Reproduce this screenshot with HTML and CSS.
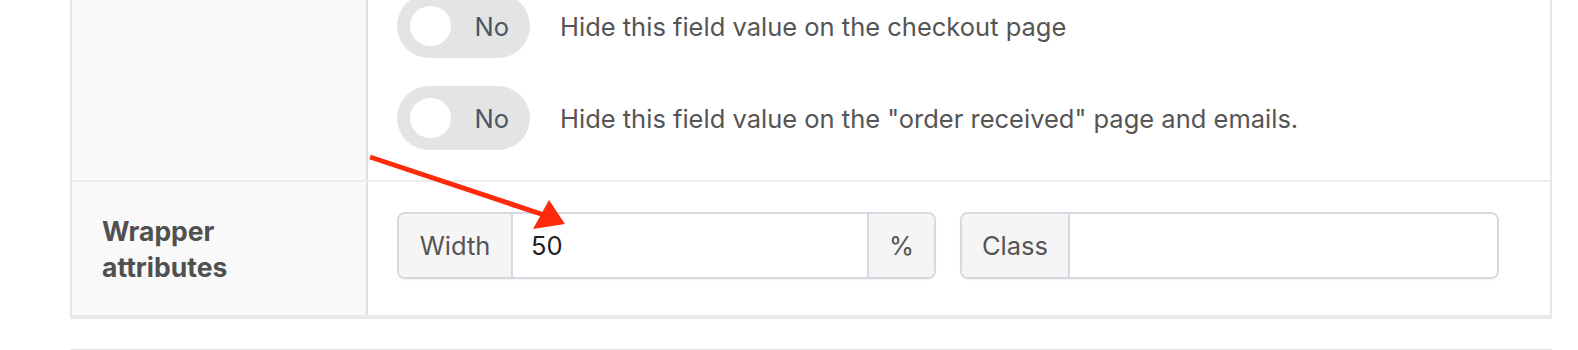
FILE: index.html
```html
<!DOCTYPE html>
<html lang="en">
<head>
<meta charset="utf-8">
<title>Field settings</title>
<link rel="stylesheet" href="styles.css">
</head>
<body>
<div class="page">
  <div class="settings">
    <div class="row row-toggles">
      <div class="label"></div>
      <div class="field toggles">
        <div class="toggle-line">
          <span class="toggle"><span class="knob"></span><span class="toggle-text">No</span></span>
          <span class="desc">Hide this field value on the checkout page</span>
        </div>
        <div class="toggle-line">
          <span class="toggle"><span class="knob"></span><span class="toggle-text">No</span></span>
          <span class="desc">Hide this field value on the "order received" page and emails.</span>
        </div>
      </div>
    </div>
    <div class="row row-wrapper">
      <div class="label"><span>Wrapper<br>attributes</span></div>
      <div class="field groups">
        <div class="input-group">
          <span class="addon addon-width">Width</span>
          <span class="input">50</span>
          <span class="addon addon-unit">%</span>
        </div>
        <div class="input-group">
          <span class="addon addon-class">Class</span>
          <span class="input"></span>
        </div>
      </div>
    </div>
  </div>
  <div class="sep"></div>
</div>
<svg class="arrow" width="1578" height="350" viewBox="0 0 1578 350" aria-hidden="true">
  <line x1="370" y1="157" x2="544" y2="215" stroke="#fc2b0c" stroke-width="5" stroke-linecap="butt"/>
  <polygon points="565,224 533,229 549,200" fill="#fc2b0c"/>
</svg>
</body>
</html>
```

FILE: styles.css
```css
* { box-sizing: border-box; }

html, body {
  margin: 0;
  padding: 0;
  background: #ffffff;
  overflow: hidden;
}

body {
  position: relative;
  width: 1578px;
  height: 350px;
  font-family: Inter, "Noto Sans", "Liberation Sans", sans-serif;
  font-size: 25.5px;
  color: #555555;
}

.page {
  margin-left: 70px;
  width: 1482px;
  margin-top: -36px;
}

.settings {
  border-left: 2px solid #e8e8e8;
  border-right: 2px solid #e8e8e8;
  border-bottom: 4px solid #e9e9e9;
}

.row {
  display: flex;
}

.row-toggles {
  border-bottom: 2px solid #ececec;
}

.label {
  flex: 0 0 296px;
  background: #f9f9f9;
  border-right: 2px solid #e0e0e0;
  display: flex;
  align-items: center;
  padding-left: 30px;
  font-weight: 700;
  font-size: 26.5px;
  line-height: 36px;
  color: #505050;
}

.field {
  flex: 1 1 auto;
  padding-left: 29px;
}

.toggles {
  display: flex;
  flex-direction: column;
  gap: 28px;
  padding-top: 30px;
  padding-bottom: 30px;
}

.toggle-line {
  display: flex;
  align-items: center;
  gap: 30px;
}

.toggle {
  flex: 0 0 133px;
  height: 64px;
  border-radius: 32px;
  background: #e4e4e4;
  display: flex;
  align-items: center;
  padding-left: 13px;
  padding-right: 21px;
}

.knob {
  width: 41px;
  height: 40px;
  border-radius: 50%;
  background: #ffffff;
}

.toggle-text {
  margin-left: auto;
  color: #4a5568;
}

.desc {
  color: #555555;
}

.groups {
  display: flex;
  gap: 24px;
  padding-top: 30px;
  padding-bottom: 36px;
}

.input-group {
  flex: 0 0 539px;
  height: 67px;
  display: flex;
  border: 2px solid #d5d9e1;
  border-radius: 8px;
  overflow: hidden;
  box-shadow: 0 1px 2px rgba(0, 0, 0, 0.06);
}

.addon {
  background: #f5f5f5;
  color: #555555;
  display: flex;
  align-items: center;
  justify-content: center;
}

.addon-width {
  flex: 0 0 114px;
  border-right: 2px solid #d5d9e1;
}

.addon-unit {
  flex: 0 0 67px;
  border-left: 2px solid #d5d9e1;
}

.addon-class {
  flex: 0 0 108px;
  border-right: 2px solid #d5d9e1;
}

.input {
  flex: 1 1 auto;
  display: flex;
  align-items: center;
  padding-left: 18px;
  color: #1f2328;
  background: #ffffff;
}

.sep {
  margin-top: 30px;
  height: 1px;
  background: #e5e5e5;
}

.arrow {
  position: absolute;
  top: 0;
  left: 0;
  pointer-events: none;
}
```
